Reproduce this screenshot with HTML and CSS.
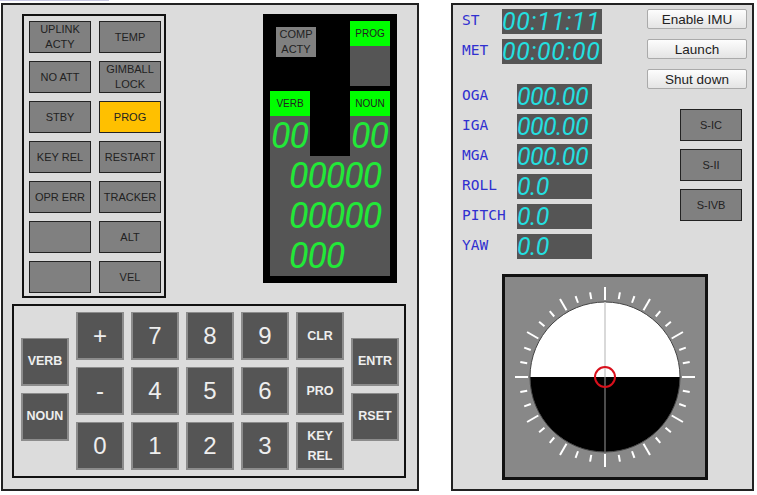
FILE: index.html
```html
<!DOCTYPE html>
<html lang="en">
  <head>
    <meta charset="UTF-8" />
    <title>Apollo Guidance Computer</title>
    <link rel="stylesheet" href="styles.css">
  </head>
  <body>
    <div class="tab-strip"></div>
    <div class="page">
      <div class="panel panel-left">
        <div class="top-row">
          <div class="lights">
            <div class="light">UPLINK<br>ACTY</div>
            <div class="light">TEMP</div>
            <div class="light">NO ATT</div>
            <div class="light">GIMBALL<br>LOCK</div>
            <div class="light">STBY</div>
            <div class="light light-on">PROG</div>
            <div class="light">KEY REL</div>
            <div class="light">RESTART</div>
            <div class="light">OPR ERR</div>
            <div class="light">TRACKER</div>
            <div class="light"></div>
            <div class="light">ALT</div>
            <div class="light"></div>
            <div class="light">VEL</div>
          </div>

          <div class="dsky">
            <div class="comp-acty">COMP<br>ACTY</div>
            <div class="dsky-label prog-label">PROG</div>
            <div class="dsky-value prog-value"></div>
            <div class="dsky-label verb-label">VERB</div>
            <div class="dsky-label noun-label">NOUN</div>
            <div class="dsky-value seg-green verb-value">00</div>
            <div class="dsky-value seg-green noun-value">00</div>
            <div class="dsky-rows seg-green">
              <div>00000</div>
              <div>00000</div>
              <div>000</div>
            </div>
          </div>
        </div>

        <div class="keypad">
          <div class="key-col">
            <button class="key">VERB</button>
            <button class="key">NOUN</button>
          </div>
          <div class="key-grid">
            <button class="key key-big">+</button>
            <button class="key key-big">7</button>
            <button class="key key-big">8</button>
            <button class="key key-big">9</button>
            <button class="key">CLR</button>
            <button class="key key-big">-</button>
            <button class="key key-big">4</button>
            <button class="key key-big">5</button>
            <button class="key key-big">6</button>
            <button class="key">PRO</button>
            <button class="key key-big">0</button>
            <button class="key key-big">1</button>
            <button class="key key-big">2</button>
            <button class="key key-big">3</button>
            <button class="key key-tall">KEY<br>REL</button>
          </div>
          <div class="key-col">
            <button class="key">ENTR</button>
            <button class="key">RSET</button>
          </div>
        </div>
      </div>

      <div class="panel panel-right">
        <div class="instruments">
          <div class="readouts">
            <div class="readout readout-time">
              <span class="readout-name">ST</span>
              <span class="readout-value seg-cyan">00:11:11</span>
            </div>
            <div class="readout readout-time readout-last">
              <span class="readout-name">MET</span>
              <span class="readout-value seg-cyan">00:00:00</span>
            </div>
            <div class="readout">
              <span class="readout-name">OGA</span>
              <span class="readout-value seg-cyan">000.00</span>
            </div>
            <div class="readout">
              <span class="readout-name">IGA</span>
              <span class="readout-value seg-cyan">000.00</span>
            </div>
            <div class="readout">
              <span class="readout-name">MGA</span>
              <span class="readout-value seg-cyan">000.00</span>
            </div>
            <div class="readout">
              <span class="readout-name">ROLL</span>
              <span class="readout-value seg-cyan">0.0</span>
            </div>
            <div class="readout">
              <span class="readout-name">PITCH</span>
              <span class="readout-value seg-cyan">0.0</span>
            </div>
            <div class="readout">
              <span class="readout-name">YAW</span>
              <span class="readout-value seg-cyan">0.0</span>
            </div>
          </div>

          <div class="controls">
            <button class="cmd">Enable IMU</button>
            <button class="cmd">Launch</button>
            <button class="cmd">Shut down</button>
            <div class="stages">
              <div class="light">S-IC</div>
              <div class="light">S-II</div>
              <div class="light">S-IVB</div>
            </div>
          </div>
        </div>

        <div class="fdai">
          <svg width="200" height="200" viewBox="-100 -100 200 200">
            <circle r="75" fill="#fff" />
            <path d="M-75 0A75 75 0 0 0 75 0Z" fill="#000" />
            <circle r="75" fill="none" stroke="#444" stroke-width="1" />
            <line y1="-75" y2="0" stroke="#ccc" stroke-width="1.5" />
            <line y1="0" y2="75" stroke="#666" stroke-width="1.5" />
            <g stroke="#fff" stroke-width="2">
              <line y1="-77" y2="-90" />
              <line y1="-79" y2="-86" transform="rotate(10)" />
              <line y1="-79" y2="-86" transform="rotate(20)" />
              <line y1="-77" y2="-90" transform="rotate(30)" />
              <line y1="-79" y2="-86" transform="rotate(40)" />
              <line y1="-79" y2="-86" transform="rotate(50)" />
              <line y1="-77" y2="-90" transform="rotate(60)" />
              <line y1="-79" y2="-86" transform="rotate(70)" />
              <line y1="-79" y2="-86" transform="rotate(80)" />
              <line y1="-77" y2="-90" transform="rotate(90)" />
              <line y1="-79" y2="-86" transform="rotate(100)" />
              <line y1="-79" y2="-86" transform="rotate(110)" />
              <line y1="-77" y2="-90" transform="rotate(120)" />
              <line y1="-79" y2="-86" transform="rotate(130)" />
              <line y1="-79" y2="-86" transform="rotate(140)" />
              <line y1="-77" y2="-90" transform="rotate(150)" />
              <line y1="-79" y2="-86" transform="rotate(160)" />
              <line y1="-79" y2="-86" transform="rotate(170)" />
              <line y1="-77" y2="-90" transform="rotate(180)" />
              <line y1="-79" y2="-86" transform="rotate(190)" />
              <line y1="-79" y2="-86" transform="rotate(200)" />
              <line y1="-77" y2="-90" transform="rotate(210)" />
              <line y1="-79" y2="-86" transform="rotate(220)" />
              <line y1="-79" y2="-86" transform="rotate(230)" />
              <line y1="-77" y2="-90" transform="rotate(240)" />
              <line y1="-79" y2="-86" transform="rotate(250)" />
              <line y1="-79" y2="-86" transform="rotate(260)" />
              <line y1="-77" y2="-90" transform="rotate(270)" />
              <line y1="-79" y2="-86" transform="rotate(280)" />
              <line y1="-79" y2="-86" transform="rotate(290)" />
              <line y1="-77" y2="-90" transform="rotate(300)" />
              <line y1="-79" y2="-86" transform="rotate(310)" />
              <line y1="-79" y2="-86" transform="rotate(320)" />
              <line y1="-77" y2="-90" transform="rotate(330)" />
              <line y1="-79" y2="-86" transform="rotate(340)" />
              <line y1="-79" y2="-86" transform="rotate(350)" />
            </g>
            <circle r="10" fill="none" stroke="#d8101c" stroke-width="2" />
          </svg>
        </div>
      </div>
    </div>
  </body>
</html>
```

FILE: styles.css
```css
/* Page */
body {
  margin: 0;
  background-color: #fff;
  font-family: "Liberation Sans", Arial, sans-serif;
  overflow: hidden;
}

.tab-strip {
  width: 109px;
  height: 1px;
  background-color: #c9c9e4;
}

.page {
  display: flex;
  gap: 32px;
  padding: 2px 0 0 1px;
}

.panel {
  box-sizing: border-box;
  height: 488px;
  background-color: #dcdcdc;
  border: 2px solid #222;
}

.panel-left {
  width: 418px;
  padding: 9px 0 0 9px;
}

.panel-right {
  width: 303px;
  padding: 1px 0 0 9px;
}

/* Warning lights */
.top-row {
  display: flex;
  align-items: flex-start;
}

.lights {
  display: grid;
  grid-template-columns: 62px 62px;
  grid-auto-rows: 32px;
  gap: 8px;
  padding: 5px 3px 3px 5px;
  margin-left: 10px;
  border: 2px solid #111;
}

.light {
  box-sizing: border-box;
  display: flex;
  align-items: center;
  justify-content: center;
  text-align: center;
  background-color: #808080;
  border: 1px solid #222;
  color: #222;
  font-size: 11px;
  line-height: 15px;
}

.light-on {
  background-color: #ffc000;
}

/* DSKY display */
.dsky {
  display: grid;
  grid-template-columns: 40px 40px 40px;
  grid-template-rows: 25px 40px 5px 25px 40px 120px;
  padding: 7px;
  margin-left: 97px;
  background-color: #000;
}

.comp-acty {
  grid-column: 1;
  grid-row: 1 / 3;
  align-self: start;
  justify-self: end;
  box-sizing: border-box;
  width: 40px;
  height: 30px;
  margin: 6px -6px 0 0;
  background-color: #808080;
  color: #222;
  font-size: 11px;
  line-height: 15px;
  text-align: center;
}

.dsky-label {
  display: flex;
  align-items: center;
  justify-content: center;
  background-color: #00ff00;
  color: #222;
  font-size: 10px;
}

.dsky-value {
  background-color: #555;
}

.prog-label { grid-column: 3; grid-row: 1; }
.prog-value { grid-column: 3; grid-row: 2; }
.verb-label { grid-column: 1; grid-row: 4; }
.noun-label { grid-column: 3; grid-row: 4; }
.verb-value { grid-column: 1; grid-row: 5; }
.noun-value { grid-column: 3; grid-row: 5; }

.dsky-rows {
  grid-column: 1 / 4;
  grid-row: 6;
  display: grid;
  grid-auto-rows: 40px;
  padding-left: 19px;
  background-color: #555;
}

/* Segment readouts */
.seg-green {
  color: #22e838;
  font-family: Roboto, "Liberation Sans", sans-serif;
  font-style: italic;
  font-size: 36px;
  line-height: 40px;
  letter-spacing: -1.2px;
}

.seg-cyan {
  color: #24dfe0;
  font-family: Roboto, "Liberation Sans", sans-serif;
  font-style: italic;
  font-size: 25px;
  line-height: 25px;
  letter-spacing: -0.6px;
}

.verb-value,
.noun-value {
  padding-left: 1px;
}

/* Keypad */
.keypad {
  box-sizing: border-box;
  display: flex;
  align-items: center;
  gap: 7px;
  width: 394px;
  height: 174px;
  margin-top: 6px;
  padding: 0 7px;
  border: 2px solid #111;
}

.key-col {
  display: grid;
  gap: 7px;
  margin-bottom: 4px;
}

.key-grid {
  display: grid;
  grid-template-columns: repeat(5, 48px);
  grid-auto-rows: 48px;
  gap: 7px;
}

.key {
  box-sizing: border-box;
  width: 48px;
  height: 48px;
  padding: 0;
  background-color: #555;
  border: solid #8c8c8c;
  border-width: 1px 2px 2px;
  color: #eee;
  font-family: inherit;
  font-size: 12.5px;
  font-weight: bold;
}

.key-big {
  font-size: 24px;
  font-weight: normal;
}

.key-tall {
  line-height: 20px;
}

/* Right panel */
.instruments {
  display: flex;
  height: 268px;
}

.readouts {
  display: flex;
  flex-direction: column;
  gap: 5px;
  width: 177px;
  padding-top: 3px;
}

.readout {
  display: flex;
  align-items: center;
  height: 25px;
}

.readout-last {
  margin-bottom: 15px;
}

.readout-name {
  width: 55px;
  padding-bottom: 3px;
  color: #3030d0;
  font-family: "DejaVu Sans Mono", monospace;
  font-size: 14.5px;
}

.readout-value {
  box-sizing: border-box;
  width: 75px;
  height: 25px;
  background-color: #555;
  white-space: pre;
}

.readout-time .readout-name {
  width: 40px;
}

.readout-time .readout-value {
  width: 100px;
  letter-spacing: 0.6px;
}

.controls {
  display: flex;
  flex-direction: column;
  align-items: flex-start;
  gap: 10px;
  padding: 3px 0 0 8px;
}

.cmd {
  width: 100px;
  height: 20px;
  padding: 0;
  background: linear-gradient(#fdfdfd, #e4e4e4);
  border: 1px solid #aaa;
  border-radius: 2px;
  color: #222;
  font-family: inherit;
  font-size: 13.5px;
}

.stages {
  display: grid;
  grid-template-columns: 62px;
  grid-auto-rows: 32px;
  gap: 8px;
  margin: 10px 0 0 33px;
}

/* Attitude indicator */
.fdai {
  width: 200px;
  height: 200px;
  margin-left: 40px;
  background-color: #888;
  border: 3px solid #111;
}

.fdai svg {
  display: block;
}
```
